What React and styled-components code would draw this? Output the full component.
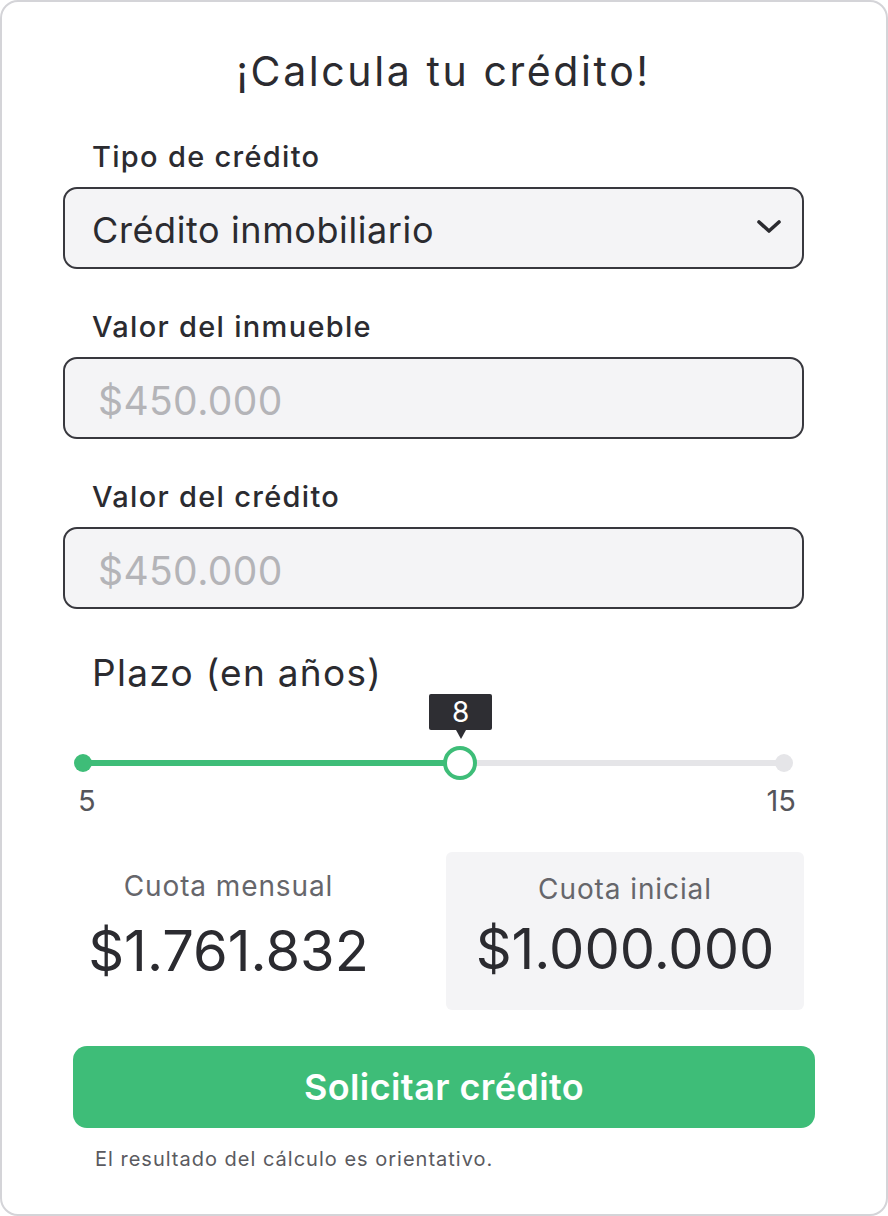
import React from 'react';
import styled, { createGlobalStyle } from 'styled-components';

const GlobalStyle = createGlobalStyle`
  * { box-sizing: border-box; }
  body {
    margin: 0;
    background: #ffffff;
    font-family: Inter, "Noto Sans", sans-serif;
    color: #2b2b30;
  }
`;

const Card = styled.div`
  width: 888px;
  height: 1216px;
  border: 2px solid #d4d4d8;
  border-radius: 18px;
  background: #fff;
  padding: 45px 82px 0 61px;
  display: flex;
  flex-direction: column;
`;

const Title = styled.h1`
  margin: 0;
  font-size: 41px;
  line-height: 48px;
  font-weight: 400;
  letter-spacing: 2.6px;
  text-align: center;
  padding-left: 20px;
`;

const Label = styled.label`
  display: block;
  margin: ${(p) => p.$top}px 0 13px 29px;
  font-size: 29px;
  line-height: 34px;
  font-weight: 500;
  letter-spacing: 1.3px;
`;

const Field = styled.div`
  height: 82px;
  border: 2px solid #38383e;
  border-radius: 14px;
  background: #f4f4f6;
  display: flex;
  align-items: center;
  justify-content: space-between;
  padding: 4px 20px 0 ${(p) => (p.$placeholder ? 33 : 27)}px;
  font-size: ${(p) => (p.$placeholder ? 39 : 36)}px;
  letter-spacing: ${(p) => (p.$placeholder ? 0.4 : 0.6)}px;
  color: ${(p) => (p.$placeholder ? '#b4b4b8' : '#2b2b30')};

  svg {
    margin-top: -6px;
  }
`;

const SliderTitle = styled.div`
  margin: 43px 0 0 29px;
  font-size: 37px;
  line-height: 42px;
  letter-spacing: 1.3px;
`;

const Slider = styled.div`
  position: relative;
  height: 86px;
  margin: 0 20px;
`;

const Track = styled.div`
  position: absolute;
  left: 0;
  right: 0;
  top: 66px;
  height: 6px;
  border-radius: 3px;
  background: #e5e5e8;
`;

const Fill = styled.div`
  position: absolute;
  left: 0;
  top: 66px;
  height: 6px;
  background: #3ebd78;
`;

const Dot = styled.div`
  position: absolute;
  top: 60px;
  width: 18px;
  height: 18px;
  border-radius: 50%;
  background: ${(p) => (p.$active ? '#3ebd78' : '#e5e5e8')};
  ${(p) => (p.$end ? 'right: -9px;' : 'left: -9px;')}
`;

const Thumb = styled.div`
  position: absolute;
  top: 52px;
  width: 34px;
  height: 34px;
  margin-left: -17px;
  border-radius: 50%;
  border: 4px solid #3ebd78;
  background: #fff;
`;

const Tip = styled.div`
  position: absolute;
  top: 0;
  width: 63px;
  height: 36px;
  margin-left: -31px;
  border-radius: 2px;
  background: #2e2e33;
  color: #fff;
  font-size: 28px;
  line-height: 36px;
  text-align: center;

  &::after {
    content: '';
    position: absolute;
    left: 50%;
    top: 36px;
    margin-left: -5px;
    border-left: 5px solid transparent;
    border-right: 5px solid transparent;
    border-top: 9px solid #2e2e33;
  }
`;

const Ticks = styled.div`
  display: flex;
  justify-content: space-between;
  margin-top: 4px;
  padding: 0 8px 0 15px;
  font-size: 29px;
  line-height: 34px;
  color: #55555a;
`;

const Results = styled.div`
  display: flex;
  gap: 52px;
  margin-top: 34px;
`;

const Result = styled.div`
  flex: ${(p) => (p.$boxed ? '0 0 358px' : '1')};
  height: 158px;
  border-radius: 6px;
  background: ${(p) => (p.$boxed ? '#f4f4f6' : 'transparent')};
  padding-top: ${(p) => (p.$boxed ? 20 : 17)}px;
  text-align: center;
`;

const ResultLabel = styled.div`
  font-size: 28px;
  line-height: 34px;
  letter-spacing: 0.9px;
  color: #66666b;
`;

const ResultValue = styled.div`
  margin-top: ${(p) => (p.$boxed ? 13 : 18)}px;
  font-size: 56px;
  line-height: 60px;
  color: #2b2b30;
`;

const Button = styled.button`
  margin: 36px -11px 0 10px;
  height: 82px;
  border: none;
  border-radius: 14px;
  background: #3ebd78;
  color: #fff;
  font-family: inherit;
  font-size: 36px;
  font-weight: 600;
  letter-spacing: 0.4px;
  cursor: pointer;
`;

const Note = styled.p`
  margin: 19px 0 0 32px;
  font-size: 20px;
  line-height: 24px;
  letter-spacing: 1px;
  color: #5a5a60;
`;

const Chevron = () => (
  <svg width="26" height="16" viewBox="0 0 26 16" fill="none">
    <polyline
      points="3,3 13,12 23,3"
      stroke="#2b2b30"
      strokeWidth="3.6"
      strokeLinecap="round"
      strokeLinejoin="round"
    />
  </svg>
);

const thumbPct = 53.8;

export default function App() {
  return (
    <>
      <GlobalStyle />
      <Card>
        <Title>¡Calcula tu crédito!</Title>

        <Label $top={45}>Tipo de crédito</Label>
        <Field>
          Crédito inmobiliario
          <Chevron />
        </Field>

        <Label $top={41}>Valor del inmueble</Label>
        <Field $placeholder>$450.000</Field>

        <Label $top={41}>Valor del crédito</Label>
        <Field $placeholder>$450.000</Field>

        <SliderTitle>Plazo (en años)</SliderTitle>
        <Slider>
          <Track />
          <Fill style={{ width: `${thumbPct}%` }} />
          <Dot $active />
          <Dot $end />
          <Thumb style={{ left: `${thumbPct}%` }} />
          <Tip style={{ left: `${thumbPct}%` }}>8</Tip>
        </Slider>
        <Ticks>
          <span>5</span>
          <span>15</span>
        </Ticks>

        <Results>
          <Result>
            <ResultLabel>Cuota mensual</ResultLabel>
            <ResultValue>$1.761.832</ResultValue>
          </Result>
          <Result $boxed>
            <ResultLabel>Cuota inicial</ResultLabel>
            <ResultValue $boxed>$1.000.000</ResultValue>
          </Result>
        </Results>

        <Button>Solicitar crédito</Button>
        <Note>El resultado del cálculo es orientativo.</Note>
      </Card>
    </>
  );
}
